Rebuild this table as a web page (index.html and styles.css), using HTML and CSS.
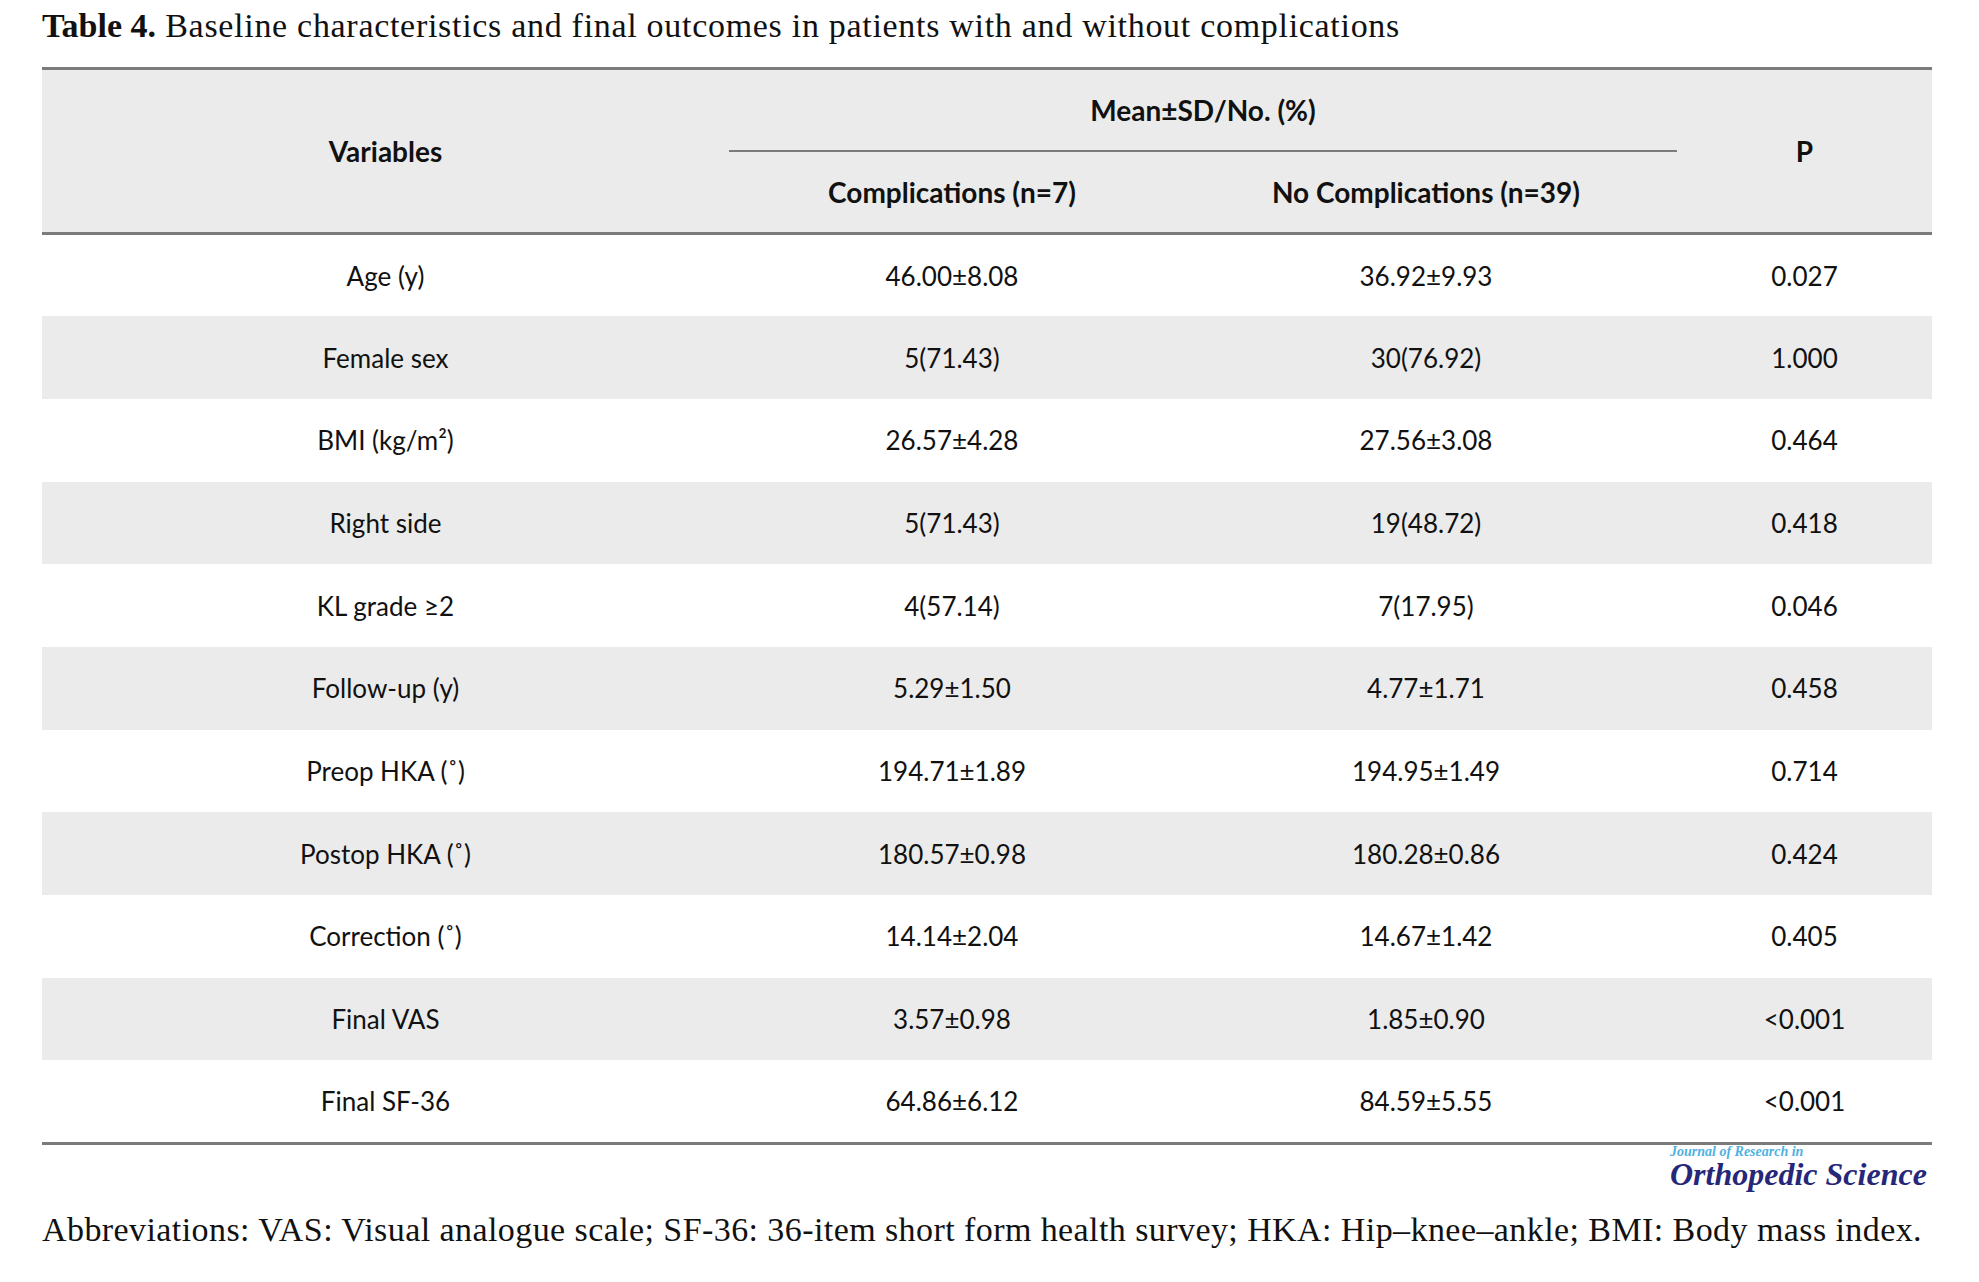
FILE: index.html
```html
<!DOCTYPE html>
<html lang="en">
<head>
<meta charset="utf-8">
<title>Table 4</title>
<link rel="stylesheet" href="styles.css">
</head>
<body>
<div class="page">
  <p class="caption"><b>Table 4.</b> Baseline characteristics and final outcomes in patients with and without complications</p>
  <table class="data">
    <colgroup>
      <col class="c1"><col class="c2"><col class="c3"><col class="c4">
    </colgroup>
    <thead>
      <tr>
        <th rowspan="2">Variables</th>
        <th colspan="2" class="group"><span class="group-label">Mean±SD/No. (%)</span></th>
        <th rowspan="2">P</th>
      </tr>
      <tr>
        <th>Complications (n=7)</th>
        <th>No Complications (n=39)</th>
      </tr>
    </thead>
    <tbody>
      <tr><td>Age (y)</td><td>46.00±8.08</td><td>36.92±9.93</td><td>0.027</td></tr>
      <tr><td>Female sex</td><td>5(71.43)</td><td>30(76.92)</td><td>1.000</td></tr>
      <tr><td>BMI (kg/m²)</td><td>26.57±4.28</td><td>27.56±3.08</td><td>0.464</td></tr>
      <tr><td>Right side</td><td>5(71.43)</td><td>19(48.72)</td><td>0.418</td></tr>
      <tr><td>KL grade ≥2</td><td>4(57.14)</td><td>7(17.95)</td><td>0.046</td></tr>
      <tr><td>Follow-up (y)</td><td>5.29±1.50</td><td>4.77±1.71</td><td>0.458</td></tr>
      <tr><td>Preop HKA (˚)</td><td>194.71±1.89</td><td>194.95±1.49</td><td>0.714</td></tr>
      <tr><td>Postop HKA (˚)</td><td>180.57±0.98</td><td>180.28±0.86</td><td>0.424</td></tr>
      <tr><td>Correction (˚)</td><td>14.14±2.04</td><td>14.67±1.42</td><td>0.405</td></tr>
      <tr><td>Final VAS</td><td>3.57±0.98</td><td>1.85±0.90</td><td>&lt;0.001</td></tr>
      <tr><td>Final SF-36</td><td>64.86±6.12</td><td>84.59±5.55</td><td>&lt;0.001</td></tr>
    </tbody>
  </table>
  <div class="logo-row">
    <div class="logo">
      <span class="logo-small">Journal of Research in</span>
      <span class="logo-big">Orthopedic Science</span>
    </div>
  </div>
  <p class="abbr">Abbreviations: VAS: Visual analogue scale; SF-36: 36-item short form health survey; HKA: Hip–knee–ankle; BMI: Body mass index.</p>
</div>
</body>
</html>
```

FILE: styles.css
```css
html, body {
  margin: 0;
  padding: 0;
  background: #ffffff;
}

.page {
  width: 1890px;
  padding: 0 0 0 42px;
  color: #111111;
}

.caption {
  margin: 0;
  height: 67px;
  padding-top: 7px;
  box-sizing: border-box;
  font-family: "Liberation Serif", "Times New Roman", serif;
  font-size: 34px;
  line-height: 38px;
  letter-spacing: 0.7px;
  white-space: nowrap;
}

.caption b {
  font-weight: bold;
  letter-spacing: 0;
}

.data {
  width: 1890px;
  border-collapse: collapse;
  table-layout: fixed;
  font-family: Lato, "Open Sans", sans-serif;
  font-size: 26px;
  color: #111111;
}

.c1 { width: 687px; }
.c2 { width: 446px; }
.c3 { width: 502px; }
.c4 { width: 255px; }

.data thead {
  background: #ebebeb;
}

.data thead tr:first-child th {
  border-top: 3px solid #7b7b7b;
}

.data thead tr:last-child th,
.data thead th[rowspan] {
  border-bottom: 3px solid #7b7b7b;
}

.data th {
  font-size: 28px;
  font-weight: bold;
  height: 82.5px;
  padding: 0;
  text-align: center;
  vertical-align: middle;
  box-sizing: border-box;
}

.data th.group {
  border-bottom: 2px solid #7b7b7b;
}

.data td {
  height: 82.7px;
  padding: 0;
  text-align: center;
  vertical-align: middle;
  box-sizing: border-box;
}

.data tbody tr:nth-child(even) {
  background: #ebebeb;
}

.data tbody tr:last-child td {
  border-bottom: 3px solid #7b7b7b;
}

.logo-row {
  display: flex;
  justify-content: flex-end;
  padding-right: 4px;
  height: 46px;
}

.logo {
  display: flex;
  flex-direction: column;
  font-family: "Liberation Serif", "Times New Roman", serif;
  font-style: italic;
  font-weight: bold;
  width: 258px;
}

.logo-small {
  color: #4fb1df;
  font-size: 14px;
  line-height: 12px;
  height: 12px;
  overflow: visible;
  margin-top: 1px;
}

.logo-big {
  color: #27277a;
  font-size: 32px;
  line-height: 33px;
  white-space: nowrap;
}

.abbr {
  margin: 0;
  padding-top: 20px;
  font-family: "Liberation Serif", "Times New Roman", serif;
  font-size: 34px;
  line-height: 38px;
  letter-spacing: 0.42px;
  white-space: nowrap;
}
```
